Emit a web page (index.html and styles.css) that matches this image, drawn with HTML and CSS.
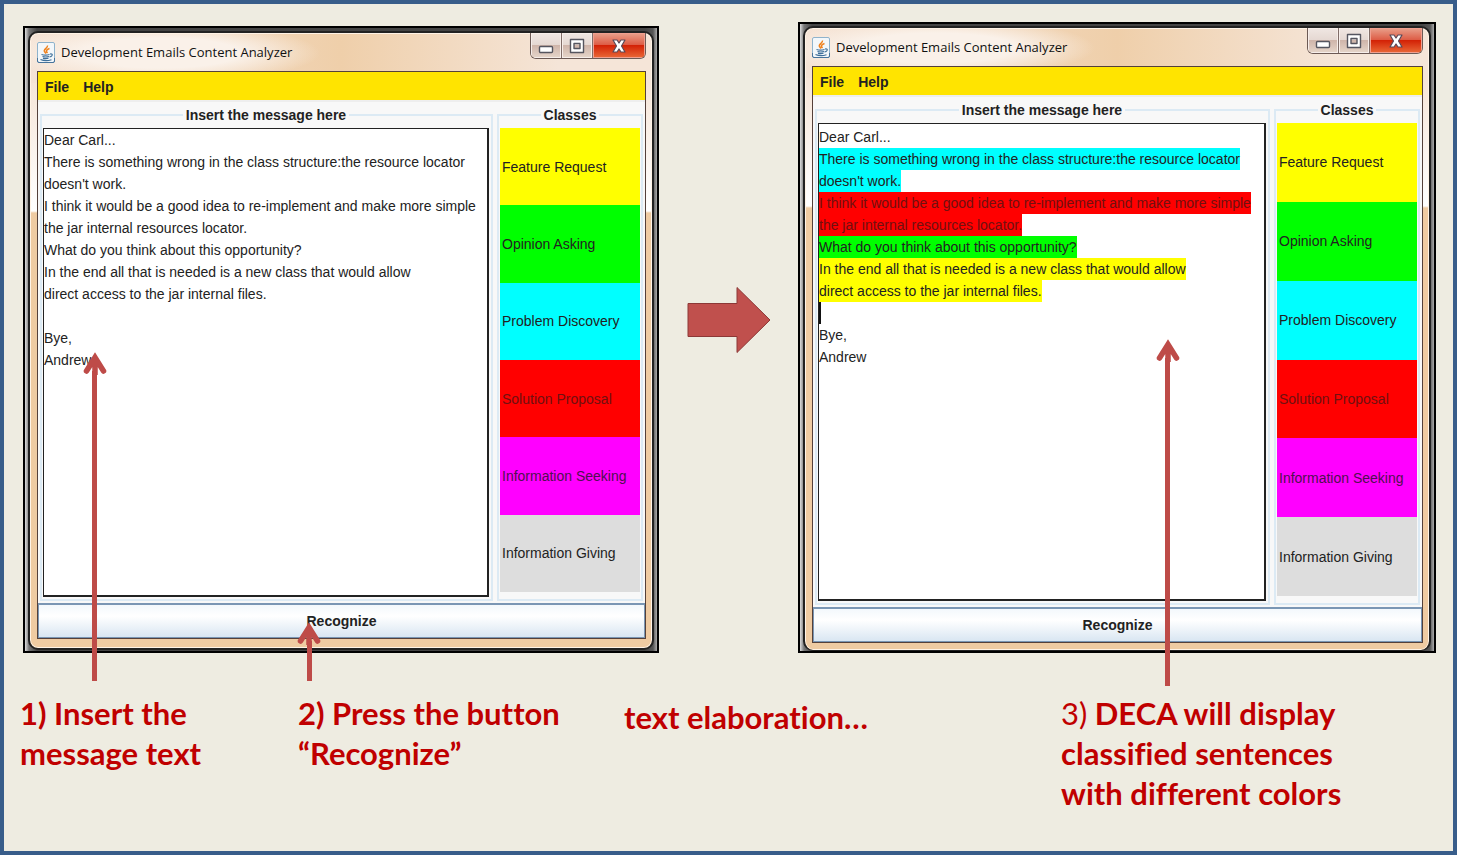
FILE: index.html
```html
<!DOCTYPE html>
<html lang="en">
<head>
<meta charset="utf-8">
<title>Development Emails Content Analyzer</title>
<link rel="stylesheet" href="styles.css">
</head>
<body>
<svg class="defs" aria-hidden="true">
  <symbol id="java" viewBox="0 0 18 21">
    <rect x="0.5" y="0.5" width="17" height="20" rx="1.5" fill="#f3f7fa" stroke="#8fb3cc"/>
    <path d="M0.5 16v3q0 1.500 1.500 1.500h14q1.500 0 1.500-1.500v-3" fill="none" stroke="#47739b"/>
    <path d="M10.500 3.500C11 6 6 7.500 7.500 9.500L9 11.500M12.500 6.500C9.500 7.500 8.500 9 10.500 11" fill="none" stroke="#f0821e" stroke-width="1.500"/>
    <path d="M4.500 12.500q4 1.200 8 0M13 12q3-.5 2 1.500-.7 1.200-2.500 1.500M5.500 14.500q3 1 6.500 0M6 16.300q3 .8 5.500 0M3.500 17.500q5 2.200 11 .3" fill="none" stroke="#3f6f99" stroke-width="1.200"/>
  </symbol>
  <symbol id="minimize" viewBox="0 0 16 16">
    <rect x="1.500" y="8.500" width="13" height="6" rx="1" fill="#fff" stroke="#55555f" stroke-width="1.400"/>
  </symbol>
  <symbol id="maximize" viewBox="0 0 16 16">
    <path fill-rule="evenodd" d="M1.500 1.500h13v13h-13zM5 5.500h6v5H5z" fill="#fff" stroke="#55555f" stroke-width="1.400" stroke-linejoin="round"/>
  </symbol>
  <symbol id="close" viewBox="0 0 16 16">
    <path d="M2 2h4l2 3 2-3h4l-3.500 6 3.500 6h-4l-2-3-2 3H2l3.500-6z" fill="#fff" stroke="#5a4a58" stroke-width="1.200" stroke-linejoin="round"/>
  </symbol>
  <symbol id="head" viewBox="0 0 24 24">
    <path d="M3.500 20L12 6.500L20.500 20M12 7V24" fill="none" stroke="#be4b48" stroke-width="5.500" stroke-linecap="round" stroke-linejoin="miter"/>
  </symbol>
</svg>
<main class="slide">
  <div class="stage">
    <section class="shot before">
      <div class="window">
        <header class="titlebar">
          <svg class="logo" aria-hidden="true"><use href="#java"/></svg>
          <h2 class="title">Development Emails Content Analyzer</h2>
          <div class="controls">
            <button class="control" aria-label="Minimize"><svg class="glyph"><use href="#minimize"/></svg></button>
            <button class="control" aria-label="Maximize"><svg class="glyph"><use href="#maximize"/></svg></button>
            <button class="control close" aria-label="Close"><svg class="glyph"><use href="#close"/></svg></button>
          </div>
        </header>
        <div class="client">
          <nav class="menubar"><button class="menu">File</button><button class="menu">Help</button></nav>
          <div class="panels">
            <fieldset class="group message">
              <legend class="legend"><label for="message">Insert the message here</label></legend>
              <textarea class="editor" id="message" spellcheck="false">Dear Carl...
There is something wrong in the class structure:the resource locator
doesn't work.
I think it would be a good idea to re-implement and make more simple
the jar internal resources locator.
What do you think about this opportunity?
In the end all that is needed is a new class that would allow
direct access to the jar internal files.

Bye,
Andrew</textarea>
            </fieldset>
            <fieldset class="group classes">
              <legend class="legend">Classes</legend>
              <ul class="list">
                <li class="class feature">Feature Request</li>
                <li class="class opinion">Opinion Asking</li>
                <li class="class problem">Problem Discovery</li>
                <li class="class solution">Solution Proposal</li>
                <li class="class seeking">Information Seeking</li>
                <li class="class giving">Information Giving</li>
              </ul>
            </fieldset>
          </div>
          <button class="recognize">Recognize</button>
        </div>
      </div>
      <div class="pointer to-message"><svg class="head"><use href="#head"/></svg></div>
      <div class="pointer to-button"><svg class="head"><use href="#head"/></svg></div>
    </section>

    <svg class="step" viewBox="0 0 84 68" aria-hidden="true">
      <path d="M1 17.500H50V1.500L83 34L50 66.500V50.500H1z" fill="#c0504d" stroke="#8c3836"/>
    </svg>

    <section class="shot after">
      <div class="window">
        <header class="titlebar">
          <svg class="logo" aria-hidden="true"><use href="#java"/></svg>
          <h2 class="title">Development Emails Content Analyzer</h2>
          <div class="controls">
            <button class="control" aria-label="Minimize"><svg class="glyph"><use href="#minimize"/></svg></button>
            <button class="control" aria-label="Maximize"><svg class="glyph"><use href="#maximize"/></svg></button>
            <button class="control close" aria-label="Close"><svg class="glyph"><use href="#close"/></svg></button>
          </div>
        </header>
        <div class="client">
          <nav class="menubar"><button class="menu">File</button><button class="menu">Help</button></nav>
          <div class="panels">
            <fieldset class="group message">
              <legend class="legend" id="result-label">Insert the message here</legend>
              <div class="editor" role="textbox" aria-multiline="true" aria-labelledby="result-label" contenteditable="true" spellcheck="false"><div class="line">Dear Carl...</div><div class="line"><mark class="mark problem">There is something wrong in the class structure:the resource locator</mark></div><div class="line"><mark class="mark problem">doesn't work.</mark></div><div class="line"><mark class="mark solution">I think it would be a good idea to re-implement and make more simple</mark></div><div class="line"><mark class="mark solution">the jar internal resources locator.</mark></div><div class="line"><mark class="mark opinion">What do you think about this opportunity?</mark></div><div class="line"><mark class="mark feature">In the end all that is needed is a new class that would allow</mark></div><div class="line"><mark class="mark feature">direct access to the jar internal files.</mark></div><div class="line caret"></div><div class="line">Bye,</div><div class="line">Andrew</div></div>
            </fieldset>
            <fieldset class="group classes">
              <legend class="legend">Classes</legend>
              <ul class="list">
                <li class="class feature">Feature Request</li>
                <li class="class opinion">Opinion Asking</li>
                <li class="class problem">Problem Discovery</li>
                <li class="class solution">Solution Proposal</li>
                <li class="class seeking">Information Seeking</li>
                <li class="class giving">Information Giving</li>
              </ul>
            </fieldset>
          </div>
          <button class="recognize">Recognize</button>
        </div>
      </div>
      <div class="pointer to-result"><svg class="head"><use href="#head"/></svg></div>
    </section>
  </div>

  <div class="captions">
    <p class="caption">1) Insert the<br>message text</p>
    <p class="caption">2) Press the button<br>“Recognize”</p>
    <p class="caption middle">text elaboration…</p>
    <p class="caption"><span class="number">3)</span> DECA will display<br>classified sentences<br>with different colors</p>
  </div>
</main>
</body>
</html>
```

FILE: styles.css
```css
* { box-sizing: border-box; }

body {
  margin: 0;
  font-family: "Liberation Sans", sans-serif;
  font-size: 14px;
  color: #222;
}

button, textarea { font: inherit; color: inherit; }

.defs { position: absolute; width: 0; height: 0; }

.slide {
  min-height: 100vh;
  padding: 18px 17px 18px 16px;
  background: #eeece1;
  border: 4px solid #385d8a;
}

.stage {
  display: grid;
  grid-template-columns: minmax(0, 636fr) minmax(0, 139fr) minmax(0, 638fr);
  align-items: end;
  padding-left: 3px;
}

.shot {
  position: relative;
  border: 2px solid #000;
  padding: 3px 3px 1px;
  background: linear-gradient(90deg, #ddd, #777 4px, #444 12px, #444 calc(100% - 12px), #555 calc(100% - 4px), #aaa);
}

.after { padding: 2px 3px 0; }

.step {
  align-self: center;
  justify-self: center;
  width: 84px;
  height: 68px;
  margin-bottom: 36px;
}

/* Application window */
.window {
  border: 2px solid #222;
  border-radius: 10px;
  padding: 0 6px 9px 7px;
  box-shadow: inset 0 0 0 1px #fff3e6;
  background:
    radial-gradient(ellipse 160px 30px at 130px 20px, #faf1e9 50%, transparent) no-repeat,
    linear-gradient(90deg, #f5e3d5, #efcfaa 50%, #f5e5d8 85%) 0 0 / 100% 50px no-repeat,
    linear-gradient(#f5e3d5 40px, #fff 178px, #efcba2 180px);
}

.after .window {
  border-bottom-width: 1px;
  padding-bottom: 7px;
}

.titlebar {
  display: flex;
  align-items: center;
  height: 38px;
}

.logo { width: 18px; height: 21px; }

.title {
  flex: 1;
  margin: 0 0 0 6px;
  font: 13px "Open Sans", sans-serif;
  color: #111;
  white-space: nowrap;
}

.controls {
  display: flex;
  align-self: start;
  height: 26px;
  border: 1px solid #6c5a55;
  border-top: 0;
  border-radius: 0 0 6px 6px;
  overflow: hidden;
}

.control {
  display: grid;
  place-items: center;
  width: 31px;
  padding: 0;
  border: 0;
  border-right: 1px solid #806d68;
  background: linear-gradient(#f0e7e3, #e5d8d2 48%, #cfb5aa 50%, #e6d6ca);
  box-shadow: inset 0 0 0 1px #f7eeea;
}

.close {
  width: 52px;
  border-right: 0;
  background: linear-gradient(#e9a18c, #dd5b44 48%, #d32206 50%, #ea6a38);
  box-shadow: inset 0 0 0 1px #f0a090;
}

.glyph { width: 16px; height: 16px; }

.client {
  border: 1px solid #54403a;
  background: #f8f8f8;
}

.menubar {
  display: flex;
  gap: 14px;
  height: 28px;
  padding: 2px 0 0 7px;
  background: #ffe400;
}

.menu {
  padding: 0;
  border: 0;
  background: none;
  font-weight: bold;
}

.panels {
  display: flex;
  gap: 4px;
  padding: 3px 2px 2px;
  border-top: 2px solid #eee;
}

.group {
  min-width: 0;
  margin: 0;
  padding: 3px 2px 2px 1px;
  border: 2px solid #dceaf4;
}

.message { flex: 1; }

.classes {
  width: 146px;
  padding: 3px 1px 7px;
}

.legend {
  margin: 0 auto;
  padding: 0 3px;
  line-height: 20px;
  font-weight: bold;
}

.editor {
  display: block;
  width: 100%;
  height: 100%;
  padding: 0;
  border: 2px solid #222;
  border-width: 1px 2px 2px 1px;
  outline: 0;
  background: #fff;
  resize: none;
  overflow: hidden;
  white-space: pre;
  line-height: 22px;
}

.after .editor { padding-top: 2px; }

.line { height: 22px; }

.mark { display: inline-block; color: inherit; }

.caret { width: 2px; background: #111; }

.list {
  display: grid;
  grid-auto-rows: 1fr;
  min-height: 464px;
  margin: 0;
  padding: 0;
  list-style: none;
}

.after .list { min-height: 473px; }

.class {
  display: flex;
  align-items: center;
  padding-left: 2px;
}

.feature { background: #ff0; }
.opinion { background: #0f0; }
.problem { background: #0ff; }
.solution { background: #f00; color: #701010; }
.seeking { background: #f0f; color: #501050; }
.giving { background: #ddd; }

.recognize {
  display: block;
  width: 100%;
  height: 35px;
  padding: 0;
  border: 1px solid #7a96b4;
  border-top-width: 2px;
  background: linear-gradient(#f3f8fc, #fff 35%, #d9e6f2);
  font-weight: bold;
}

/* Callout arrows drawn over the windows */
.pointer {
  position: absolute;
  bottom: -30px;
  width: 24px;
  margin-left: -12px;
  background: linear-gradient(#be4b48, #be4b48) center 20px / 5px 100% no-repeat;
}

.head { display: block; width: 24px; height: 24px; }

.to-message { left: 11%; height: 330px; }
.to-button { left: 45%; height: 60px; }
.to-result { left: 58%; bottom: -35px; height: 348px; }

.captions {
  display: grid;
  grid-template-columns: 278fr 326fr 437fr 375fr;
  padding-top: 40px;
}

.caption {
  margin: 0;
  font: bold 31px/40px Lato, sans-serif;
  font-variant-ligatures: none;
  color: #c00000;
  white-space: nowrap;
}

.middle { padding-top: 4px; }

.number { font-weight: normal; }
```
